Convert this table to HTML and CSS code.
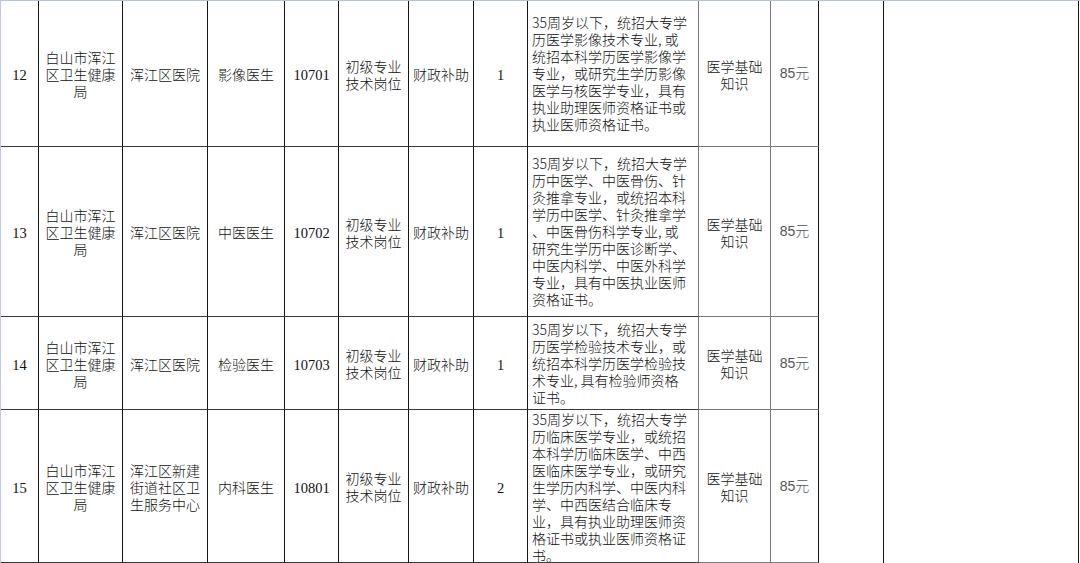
FILE: index.html
```html
<!DOCTYPE html>
<html lang="zh-CN">
<head>
<meta charset="utf-8">
<title>招聘岗位表</title>
<link rel="stylesheet" href="styles.css">
</head>
<body>
<div class="sheet">
  <div class="grid">
    <div class="cell span-a"></div>
    <div class="cell span-b"></div>

    <div class="cell num">12</div>
    <div class="cell">白山市浑江<br>区卫生健康<br>局</div>
    <div class="cell">浑江区医院</div>
    <div class="cell">影像医生</div>
    <div class="cell num">10701</div>
    <div class="cell">初级专业<br>技术岗位</div>
    <div class="cell">财政补助</div>
    <div class="cell num">1</div>
    <div class="cell req"><p><span class="d">35</span>周岁以下，统招大专学<br>历医学影像技术专业, 或<br>统招本科学历医学影像学<br>专业，或研究生学历影像<br>医学与核医学专业，具有<br>执业助理医师资格证书或<br>执业医师资格证书。</p></div>
    <div class="cell soft">医学基础<br>知识</div>
    <div class="cell soft fee">85元</div>

    <div class="cell num">13</div>
    <div class="cell">白山市浑江<br>区卫生健康<br>局</div>
    <div class="cell">浑江区医院</div>
    <div class="cell">中医医生</div>
    <div class="cell num">10702</div>
    <div class="cell">初级专业<br>技术岗位</div>
    <div class="cell">财政补助</div>
    <div class="cell num">1</div>
    <div class="cell req"><p><span class="d">35</span>周岁以下，统招大专学<br>历中医学、中医骨伤、针<br>灸推拿专业，或统招本科<br>学历中医学、针灸推拿学<br>、中医骨伤科学专业, 或<br>研究生学历中医诊断学、<br>中医内科学、中医外科学<br>专业，具有中医执业医师<br>资格证书。</p></div>
    <div class="cell soft">医学基础<br>知识</div>
    <div class="cell soft fee">85元</div>

    <div class="cell num">14</div>
    <div class="cell">白山市浑江<br>区卫生健康<br>局</div>
    <div class="cell">浑江区医院</div>
    <div class="cell">检验医生</div>
    <div class="cell num">10703</div>
    <div class="cell">初级专业<br>技术岗位</div>
    <div class="cell">财政补助</div>
    <div class="cell num">1</div>
    <div class="cell req"><p><span class="d">35</span>周岁以下，统招大专学<br>历医学检验技术专业，或<br>统招本科学历医学检验技<br>术专业, 具有检验师资格<br>证书。</p></div>
    <div class="cell soft">医学基础<br>知识</div>
    <div class="cell soft fee">85元</div>

    <div class="cell num">15</div>
    <div class="cell">白山市浑江<br>区卫生健康<br>局</div>
    <div class="cell">浑江区新建<br>街道社区卫<br>生服务中心</div>
    <div class="cell">内科医生</div>
    <div class="cell num">10801</div>
    <div class="cell">初级专业<br>技术岗位</div>
    <div class="cell">财政补助</div>
    <div class="cell num">2</div>
    <div class="cell req top"><p><span class="d">35</span>周岁以下，统招大专学<br>历临床医学专业，或统招<br>本科学历临床医学、中西<br>医临床医学专业，或研究<br>生学历内科学、中医内科<br>学、中西医结合临床专<br>业，具有执业助理医师资<br>格证书或执业医师资格证<br>书。</p></div>
    <div class="cell soft">医学基础<br>知识</div>
    <div class="cell soft fee">85元</div>
  </div>
</div>
</body>
</html>
```

FILE: styles.css
```css
html, body {
  margin: 0;
  padding: 0;
  background: #ffffff;
  overflow: hidden;
}

.sheet {
  width: 1080px;
  height: 563px;
  box-sizing: border-box;
  border-top: 1px solid #b8bfd8;
  border-left: 1px solid #c4c9df;
  overflow: hidden;
}

.grid {
  display: grid;
  grid-template-columns: 38px 84px 85px 77px 54px 70px 65px 54px 171px 72px 48px 65px 195px;
  grid-template-rows: 146px 170px 93px 153px;
  font-family: "Noto Sans CJK SC", "Liberation Sans", sans-serif;
  font-size: 14px;
  font-weight: 300;
  color: #111111;
}

.cell {
  display: flex;
  align-items: center;
  justify-content: center;
  text-align: center;
  line-height: 17px;
  border-right: 1px solid #151515;
  border-bottom: 1px solid #3a3a3a;
  overflow: hidden;
  min-width: 0;
  min-height: 0;
  padding-top: 2px;
}

.num {
  font-family: "Liberation Serif", "Noto Sans CJK SC", serif;
  font-size: 14.5px;
  font-weight: 400;
  padding-top: 4px;
}

.req {
  justify-content: flex-start;
  text-align: left;
  line-height: 17px;
  padding: 0 0 0 4px;
  border-right-color: #7a7a7a;
}

.req.top {
  align-items: flex-start;
  padding-top: 1px;
}

.req p {
  margin: 0;
  white-space: nowrap;
}

.d {
  color: #222222;
}

.soft {
  border-bottom-color: #7a7a7a;
}

.cell.soft:not(.fee) {
  border-right-color: #7a7a7a;
}

.fee {
  font-family: "Liberation Sans", "Noto Sans CJK SC", sans-serif;
  color: #555555;
  padding-top: 0;
}

.span-a {
  grid-column: 12;
  grid-row: 1 / span 4;
  border-bottom: 0;
}

.span-b {
  grid-column: 13;
  grid-row: 1 / span 4;
  border-bottom: 0;
}
```
